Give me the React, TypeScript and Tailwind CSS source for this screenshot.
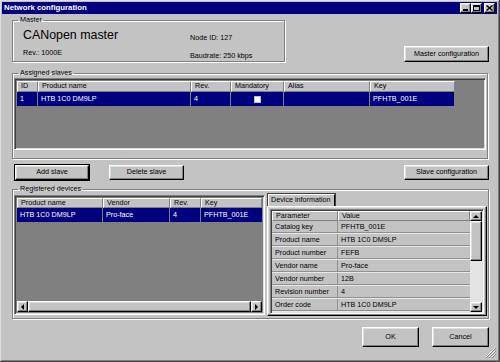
import React from "react";

const raised =
  "border border-t-white border-l-white border-b-black border-r-black shadow-[inset_-1px_-1px_0_#808080,inset_1px_1px_0_#dfdfdf]";
const sunken =
  "border border-t-[#808080] border-l-[#808080] border-b-white border-r-white shadow-[inset_1px_1px_0_#404040,inset_-1px_-1px_0_#dfdfdf]";
const headerCell =
  "h-full flex items-center px-[3px] border-t border-l border-t-white border-l-white border-r border-b border-r-[#808080] border-b-[#808080] truncate";

const deviceInfo = [
  ["Catalog key", "PFHTB_001E"],
  ["Product name", "HTB 1C0 DM9LP"],
  ["Product number", "FEFB"],
  ["Vendor name", "Pro-face"],
  ["Vendor number", "12B"],
  ["Revision number", "4"],
  ["Order code", "HTB 1C0 DM9LP"],
];

function Button({ label, className = "" }: { label: string; className?: string }) {
  return (
    <button
      className={`${raised} bg-[#c3c3c3] flex items-center justify-center text-[7.2px] text-black ${className}`}
    >
      {label}
    </button>
  );
}

function Group({
  title,
  className = "",
  children,
}: {
  title: string;
  className?: string;
  children?: React.ReactNode;
}) {
  return (
    <fieldset
      className={`border border-[#808080] shadow-[1px_1px_0_#fff,inset_1px_1px_0_#fff] ${className}`}
    >
      <legend className="ml-[5px] px-[2px] text-[7.2px] leading-[10px] text-black">
        {title}
      </legend>
      {children}
    </fieldset>
  );
}

function Arrow({ dir }: { dir: "up" | "down" | "left" | "right" }) {
  const pts = {
    up: "1,4 4,1 7,4",
    down: "1,1 4,4 7,1",
    left: "4,1 1,4 4,7",
    right: "1,1 4,4 1,7",
  }[dir];
  const vertical = dir === "up" || dir === "down";
  return (
    <svg width={vertical ? 8 : 5} height={vertical ? 5 : 8} viewBox={vertical ? "0 0 8 5" : "0 0 5 8"}>
      <polygon points={pts} fill="#000" />
    </svg>
  );
}

function TitleBar() {
  return (
    <div className="h-[14px] bg-[#00007f] flex items-center justify-between pl-[2px] pr-[2px]">
      <span className="text-white font-bold text-[7.8px]">Network configuration</span>
      <div className="flex items-center">
        <div className={`${raised} bg-[#c3c3c3] w-[11px] h-[10px] flex items-end justify-center pb-[1px]`}>
          <div className="w-[5px] h-[2px] bg-black" />
        </div>
        <div className={`${raised} bg-[#c3c3c3] w-[11px] h-[10px] flex items-center justify-center`}>
          <div className="w-[7px] h-[6px] border border-black border-t-2" />
        </div>
        <div className={`${raised} bg-[#c3c3c3] w-[11px] h-[10px] ml-[2px] flex items-center justify-center`}>
          <svg width="7" height="6" viewBox="0 0 7 6">
            <path d="M0.5 0.5 L6.5 5.5 M6.5 0.5 L0.5 5.5" stroke="#000" strokeWidth="1.4" />
          </svg>
        </div>
      </div>
    </div>
  );
}

export default function App() {
  return (
    <div className="w-[500px] h-[362px] bg-[#c3c3c3] p-[2px] flex flex-col font-['Liberation_Sans',Arial,sans-serif] text-black border-r border-b border-r-[#404040] border-b-[#404040] shadow-[inset_1px_1px_0_#dfdfdf,inset_-1px_-1px_0_#808080] overflow-hidden">
      <TitleBar />

      <div className="flex-1 flex flex-col pl-[10px] pr-[8px]">
        {/* master */}
        <div className="mt-[1px] flex items-end justify-between">
          <Group title="Master" className="w-[273px] h-[47px] flex">
            <div className="flex w-full pl-[10px] pt-[3px]">
              <div className="w-[167px] flex flex-col">
                <span className="text-[12.4px] leading-[14px]">CANopen master</span>
                <span className="text-[7.2px] mt-[6px]">Rev.: 1000E</span>
              </div>
              <div className="flex flex-col text-[7.2px] pt-[5px]">
                <span>Node ID: 127</span>
                <span className="mt-[7px]">Baudrate: 250 kbps</span>
              </div>
            </div>
          </Group>
          <Button label="Master configuration" className="w-[85px] h-[16px]" />
        </div>

        {/* assigned slaves */}
        <Group title="Assigned slaves" className="mt-[6px] w-[476px] h-[91px]">
          <div className={`${sunken} mx-[1px] h-[72px] bg-[#808080] flex flex-col pr-[30px] p-[2px]`}>
            <div className="h-[11px] flex text-[7.2px] bg-[#c3c3c3] w-[438px]">
              <div className={`${headerCell} w-[21px]`}>ID</div>
              <div className={`${headerCell} w-[153px]`}>Product name</div>
              <div className={`${headerCell} w-[40px]`}>Rev.</div>
              <div className={`${headerCell} w-[53px]`}>Mandatory</div>
              <div className={`${headerCell} w-[86px]`}>Alias</div>
              <div className={`${headerCell} w-[85px]`}>Key</div>
            </div>
            <div className="h-[14px] flex text-[7.2px] text-white bg-[#00007f] w-[438px]">
              <div className="w-[21px] px-[3px] flex items-center border-r border-[#808080]">1</div>
              <div className="w-[153px] px-[3px] flex items-center border-r border-[#808080]">HTB 1C0 DM9LP</div>
              <div className="w-[40px] px-[3px] flex items-center border-r border-[#808080]">4</div>
              <div className="w-[53px] flex items-center justify-center border-r border-[#808080]">
                <div className="w-[7px] h-[7px] bg-white border border-[#c0c0c0]" />
              </div>
              <div className="w-[86px] px-[3px] flex items-center border-r border-[#808080]" />
              <div className="w-[85px] px-[3px] flex items-center border-r border-[#808080]">PFHTB_001E</div>
            </div>
          </div>
        </Group>

        {/* slave buttons */}
        <div className="mt-[6px] flex items-center">
          <Button label="Add slave" className="ml-[3px] w-[74px] h-[15px] outline outline-1 outline-black" />
          <Button label="Delete slave" className="ml-[20px] w-[75px] h-[15px]" />
          <Button label="Slave configuration" className="ml-auto w-[85px] h-[15px]" />
        </div>

        {/* registered devices */}
        <Group title="Registered devices" className="mt-[4px] h-[135px]">
          <div className="flex h-[122px] pl-[1px] pr-[1px]">
            {/* device list */}
            <div className={`${sunken} w-[251px] h-[120px] mt-[1px] bg-[#808080] flex flex-col p-[2px]`}>
              <div className="h-[10px] flex text-[7.2px] bg-[#c3c3c3]">
                <div className={`${headerCell} w-[86px]`}>Product name</div>
                <div className={`${headerCell} w-[67px]`}>Vendor</div>
                <div className={`${headerCell} w-[31px]`}>Rev.</div>
                <div className={`${headerCell} flex-1`}>Key</div>
              </div>
              <div className="h-[14px] flex text-[7.2px] text-white bg-[#00007f]">
                <div className="w-[86px] px-[3px] flex items-center border-r border-[#808080]">HTB 1C0 DM9LP</div>
                <div className="w-[67px] px-[3px] flex items-center border-r border-[#808080]">Pro-face</div>
                <div className="w-[31px] px-[3px] flex items-center border-r border-[#808080]">4</div>
                <div className="flex-1 px-[3px] flex items-center">PFHTB_001E</div>
              </div>
              <div className="flex-1" />
              <div className="h-[11px] flex bg-[#e0e0e0]">
                <div className={`${raised} bg-[#c3c3c3] w-[11px] flex items-center justify-center`}>
                  <Arrow dir="left" />
                </div>
                <div className={`${raised} bg-[#c3c3c3] w-[224px]`} />
                <div className="flex-1" />
                <div className={`${raised} bg-[#c3c3c3] w-[11px] flex items-center justify-center`}>
                  <Arrow dir="right" />
                </div>
              </div>
            </div>

            {/* device information */}
            <div className="ml-[2px] flex-1 flex flex-col">
              <div className="flex">
                <div className="h-[12px] w-[67px] ml-[1px] border-t border-l border-r border-t-white border-l-white border-r-black bg-[#c3c3c3] text-[7.2px] flex items-center px-[2px] whitespace-nowrap outline outline-1 outline-[#404040]">
                  Device information
                </div>
              </div>
              <div className={`${raised} flex-1 p-[2px] pb-[1px]`}>
                <div className={`${sunken} h-full flex p-[1px]`}>
                  <div className="flex-1 flex flex-col text-[7.2px]">
                    <div className="h-[10px] flex bg-[#c3c3c3]">
                      <div className={`${headerCell} w-[66px]`}>Parameter</div>
                      <div className={`${headerCell} flex-1`}>Value</div>
                    </div>
                    {deviceInfo.map(([k, v]) => (
                      <div key={k} className="h-[13px] flex border-b border-b-[#e8e8e8] shadow-[inset_0_-1px_0_#909090]">
                        <div className="w-[66px] px-[3px] flex items-center border-r border-r-[#909090]">{k}</div>
                        <div className="flex-1 px-[3px] flex items-center">{v}</div>
                      </div>
                    ))}
                  </div>
                  <div className="w-[12px] flex flex-col bg-[#e4e4e4]">
                    <div className={`${raised} bg-[#c3c3c3] h-[10px] flex items-center justify-center`}>
                      <Arrow dir="up" />
                    </div>
                    <div className={`${raised} bg-[#c3c3c3] h-[40px]`} />
                    <div className="flex-1" />
                    <div className={`${raised} bg-[#c3c3c3] h-[10px] flex items-center justify-center`}>
                      <Arrow dir="down" />
                    </div>
                  </div>
                </div>
              </div>
            </div>
          </div>
        </Group>

        {/* bottom buttons */}
        <div className="mt-[8px] flex justify-end items-center">
          <Button label="OK" className="w-[57px] h-[20px]" />
          <Button label="Cancel" className="ml-[13px] w-[57px] h-[20px]" />
        </div>
        <div className="flex-1 flex justify-end items-end -mr-[7px] pb-[1px]">
          <svg width="11" height="11" viewBox="0 0 11 11">
            <path d="M10 1 L1 10 M10 4 L4 10 M10 7 L7 10" stroke="#fff" strokeWidth="1" />
            <path d="M11 1 L1 11 M11 4 L4 11 M11 7 L7 11" stroke="#808080" strokeWidth="1" />
          </svg>
        </div>
      </div>
    </div>
  );
}
